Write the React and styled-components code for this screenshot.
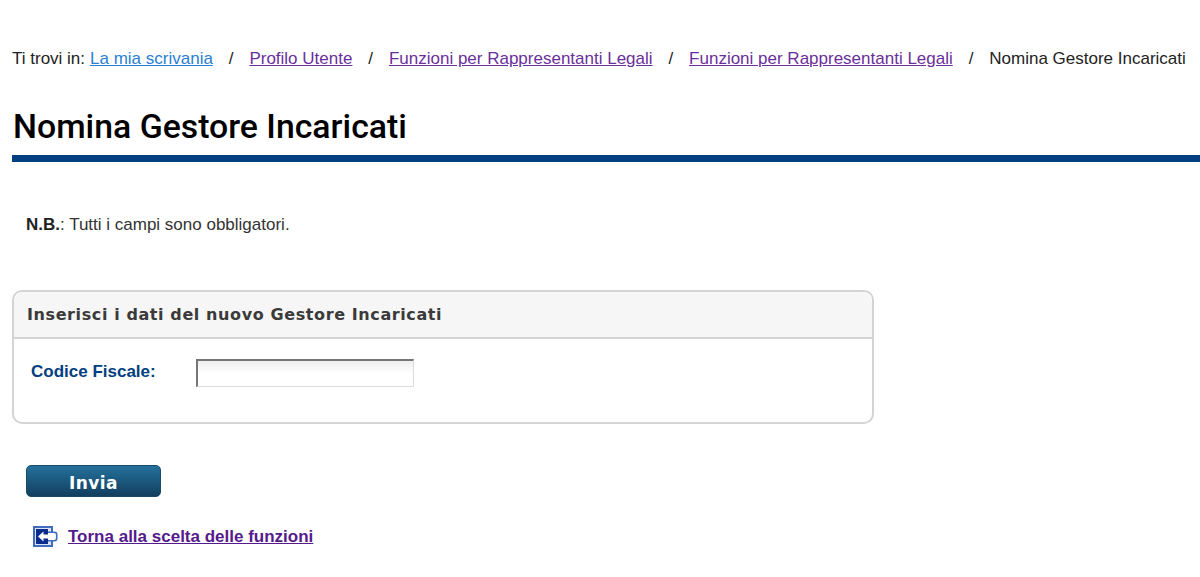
import React from 'react'
import styled, { createGlobalStyle } from 'styled-components'

const Global = createGlobalStyle`
  html, body { margin: 0; padding: 0; background: #fff; }
  body { font-family: "Liberation Sans", Arial, sans-serif; color: #222; overflow: hidden; }
`
const Page = styled.div`
  width: 1200px;
  height: 577px;
  padding: 49px 0 0 12px;
  box-sizing: border-box;
  overflow: hidden;
`
const Crumbs = styled.div`
  display: flex;
  align-items: center;
  height: 20px;
  font-size: 17px;
  line-height: 20px;
  white-space: nowrap;
  color: #222;
`
const Crumb = styled.a`
  color: ${p => (p.$fresh ? '#2a7fd5' : '#6a2f9c')};
  text-decoration: underline;
  margin-left: ${p => (p.$fresh ? '5px' : '0')};
`
const Sep = styled.span`
  margin: 0 15.9px;
`
const Title = styled.h1`
  margin: 37px 0 0;
  height: 49px;
  font-family: Roboto, sans-serif;
  font-weight: 500;
  font-size: 33.8px;
  line-height: 42px;
  text-indent: 1px;
  color: #000;
  border-bottom: 7px solid #004080;
`
const Note = styled.p`
  margin: 53px 0 0 14px;
  font-size: 17px;
  line-height: 20px;
  color: #333;
  b { color: #222; }
`
const Panel = styled.fieldset`
  margin: 55px 0 0;
  padding: 0;
  width: 862px;
  height: 134px;
  box-sizing: border-box;
  border: 2px solid #d4d4d4;
  border-radius: 10px;
  overflow: hidden;
`
const PanelHead = styled.div`
  height: 47px;
  box-sizing: border-box;
  padding-left: 13px;
  background: #f6f6f6;
  border-bottom: 2px solid #d4d4d4;
  font-family: "DejaVu Sans", sans-serif;
  font-weight: 700;
  font-size: 16px;
  line-height: 45px;
  letter-spacing: 0.6px;
  color: #3a3a3a;
`
const Row = styled.div`
  display: flex;
  align-items: flex-start;
  padding: 20px 0 0 17px;
`
const Label = styled.label`
  width: 165px;
  font-size: 17px;
  font-weight: 700;
  line-height: 25px;
  color: #004080;
`
const Field = styled.input`
  width: 218px;
  height: 28px;
  box-sizing: border-box;
  padding: 0 4px;
  border-style: solid;
  border-width: 2px 1px 1px 2px;
  border-color: #767676 #dcdcdc #dcdcdc #767676;
  background: linear-gradient(#efefef, #fff 50%);
  outline: none;
`
const Send = styled.button`
  display: block;
  margin: 41px 0 0 14px;
  width: 135px;
  height: 32px;
  padding: 3px 0 0;
  border: 1px solid #1a4a68;
  border-radius: 5px;
  background: linear-gradient(#24719c, #123f5f);
  font-family: "DejaVu Sans", sans-serif;
  font-weight: 700;
  font-size: 17px;
  letter-spacing: 0.4px;
  color: #fff;
`
const Back = styled.div`
  display: flex;
  align-items: center;
  gap: 10px;
  margin: 29px 0 0 21px;
  height: 21px;
`
const BackLink = styled.a`
  font-size: 17px;
  font-weight: 700;
  color: #551a8b;
  text-decoration: underline;
`

const BackIcon = () => (
  <svg width="25" height="21" viewBox="0 0 25 21">
    <path d="M0 0H20V21H0Z" fill="#3f6cbc" />
    <path d="M2 2H18V19H2Z" fill="#dbe3f3" />
    <path d="M3 3H15V18H3Z" fill="#0a2c8c" />
    <path d="M15 5.5H21.5Q24.5 5.5 24.5 8.5V12.5Q24.5 15.5 21.5 15.5H15Z" fill="#3f6cbc" />
    <path d="M15 7H21Q23 7 23 9V12Q23 14 21 14H15Z" fill="#fff" />
    <path d="M5 10.5L10.5 5.5V8.5H20V12.5H10.5V15.5Z" fill="#fff" />
  </svg>
)

export default function App() {
  return (
    <Page>
      <Global />
      <Crumbs>
        Ti trovi in:<Crumb $fresh href="#">La mia scrivania</Crumb>
        <Sep>/</Sep><Crumb href="#">Profilo Utente</Crumb>
        <Sep>/</Sep><Crumb href="#">Funzioni per Rappresentanti Legali</Crumb>
        <Sep>/</Sep><Crumb href="#">Funzioni per Rappresentanti Legali</Crumb>
        <Sep>/</Sep>Nomina Gestore Incaricati
      </Crumbs>
      <Title>Nomina Gestore Incaricati</Title>
      <Note><b>N.B.</b>: Tutti i campi sono obbligatori.</Note>
      <Panel>
        <PanelHead>Inserisci i dati del nuovo Gestore Incaricati</PanelHead>
        <Row>
          <Label>Codice Fiscale:</Label>
          <Field />
        </Row>
      </Panel>
      <Send>Invia</Send>
      <Back>
        <BackIcon />
        <BackLink href="#">Torna alla scelta delle funzioni</BackLink>
      </Back>
    </Page>
  )
}
